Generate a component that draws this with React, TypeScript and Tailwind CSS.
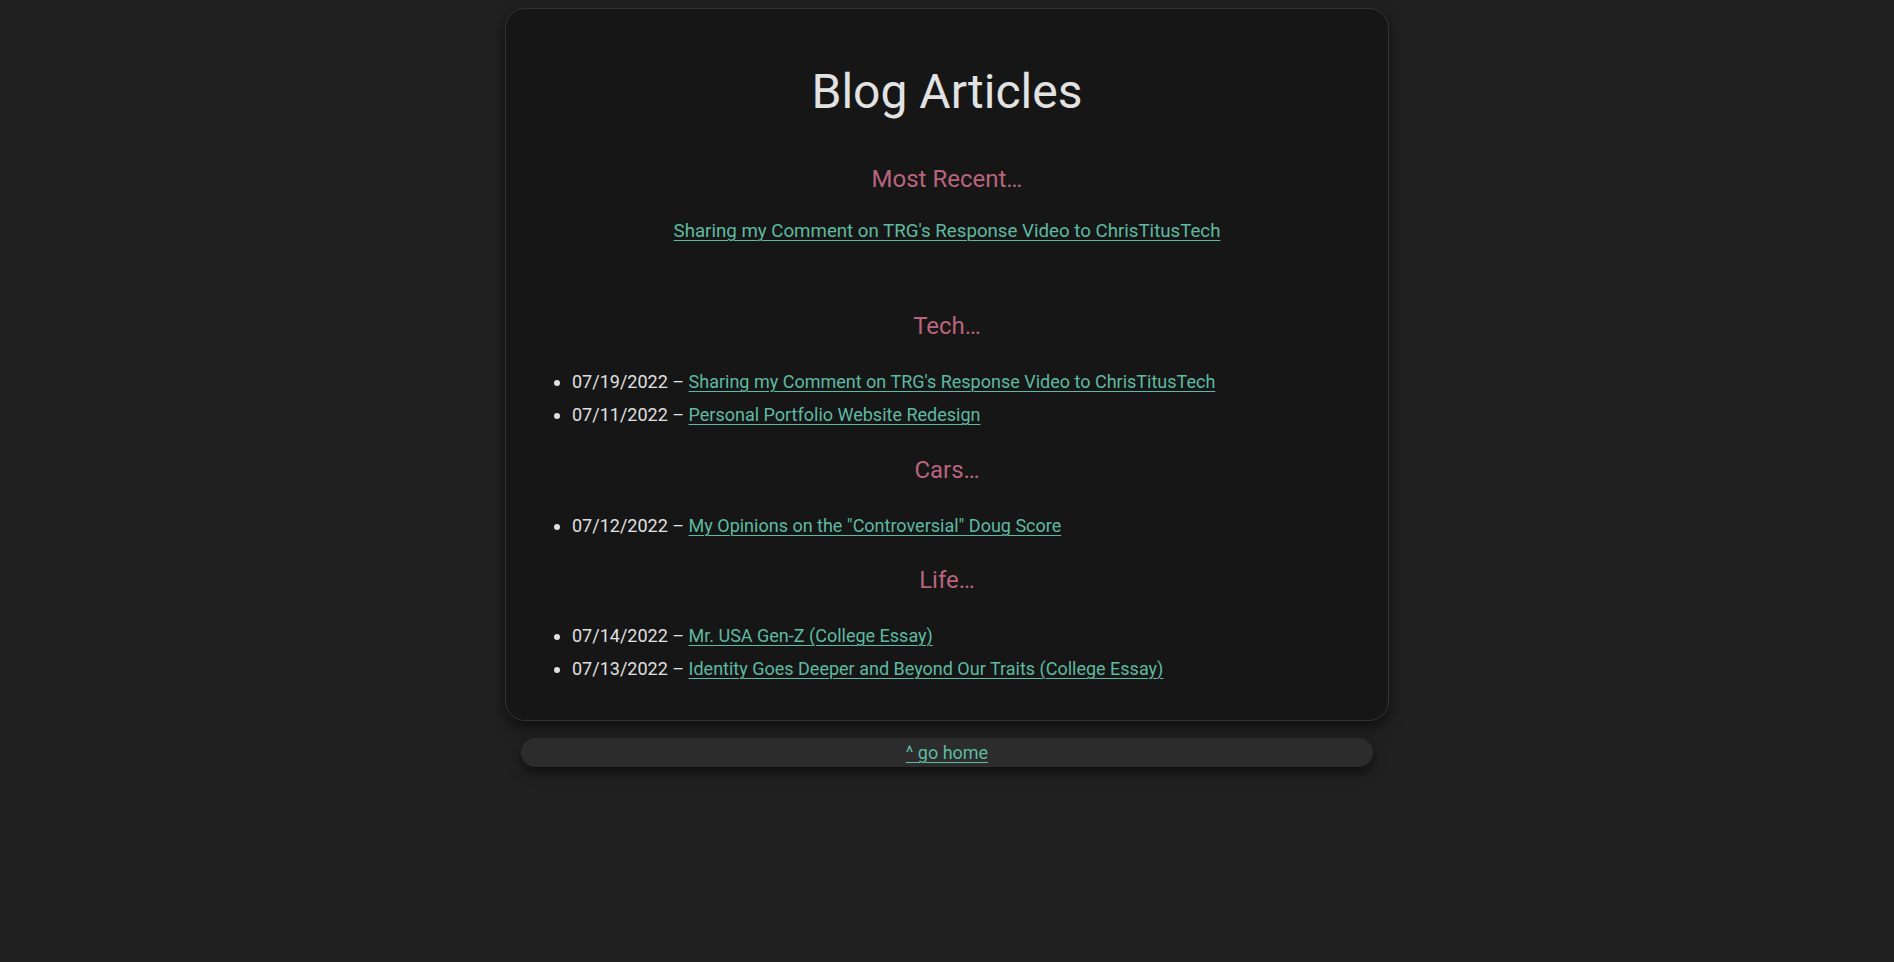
import React from "react";

const LINK = "text-[#5eba a1] underline decoration-[#5eba a1] underline-offset-[3px]";

function Item({ date, title }: { date: string; title: string }) {
  return (
    <li className="leading-[33px]">
      {date} –{" "}
      <a href="#" className="text-[#5ebaa1] underline decoration-[#5ebaa1] decoration-1 underline-offset-[3px]">
        {title}
      </a>
    </li>
  );
}

export default function App() {
  void LINK;
  return (
    <div
      className="min-h-[962px] w-full bg-[#202020] pt-[8px] text-[#e0e0e0]"
      style={{ fontFamily: "Roboto, 'Noto Sans', sans-serif" }}
    >
      <div className="mx-auto w-[884px] rounded-[20px] border border-[#343434] bg-[#161616] px-[40px] pt-[55px] pb-[35px] shadow-[0_6px_14px_rgba(0,0,0,0.55)]">
        <h1 className="text-center text-[48px] leading-[56px] font-normal text-[#e2e2e2]">Blog Articles</h1>
        <h2 className="mt-[45px] text-center text-[24px] leading-[28px] font-normal text-[#b8647d]">Most Recent…</h2>
        <p className="mt-[24px] text-center text-[18.7px] leading-[28px]">
          <a href="#" className="text-[#5ebaa1] underline decoration-[#5ebaa1] decoration-1 underline-offset-[3px]">
            Sharing my Comment on TRG's Response Video to ChrisTitusTech
          </a>
        </p>

        <h2 className="mt-[67px] text-center text-[24px] leading-[28px] font-normal text-[#b8647d]">Tech…</h2>
        <ul className="mt-[25px] list-disc pl-[26px] text-[18px]">
          <Item date="07/19/2022" title="Sharing my Comment on TRG's Response Video to ChrisTitusTech" />
          <Item date="07/11/2022" title="Personal Portfolio Website Redesign" />
        </ul>

        <h2 className="mt-[25px] text-center text-[24px] leading-[28px] font-normal text-[#b8647d]">Cars…</h2>
        <ul className="mt-[25px] list-disc pl-[26px] text-[18px]">
          <Item date="07/12/2022" title={'My Opinions on the "Controversial" Doug Score'} />
        </ul>

        <h2 className="mt-[24px] text-center text-[24px] leading-[28px] font-normal text-[#b8647d]">Life…</h2>
        <ul className="mt-[25px] list-disc pl-[26px] text-[18px]">
          <Item date="07/14/2022" title="Mr. USA Gen-Z (College Essay)" />
          <Item date="07/13/2022" title="Identity Goes Deeper and Beyond Our Traits (College Essay)" />
        </ul>
      </div>

      <div className="mx-auto mt-[17px] h-[29px] w-[852px] rounded-full bg-[#2c2c2c] text-center text-[18px] leading-[29px] shadow-[0_6px_12px_rgba(0,0,0,0.5)]">
        <a href="#" className="text-[#5ebaa1] underline decoration-[#5ebaa1] decoration-1 underline-offset-[3px]">
          ^ go home
        </a>
      </div>
    </div>
  );
}
